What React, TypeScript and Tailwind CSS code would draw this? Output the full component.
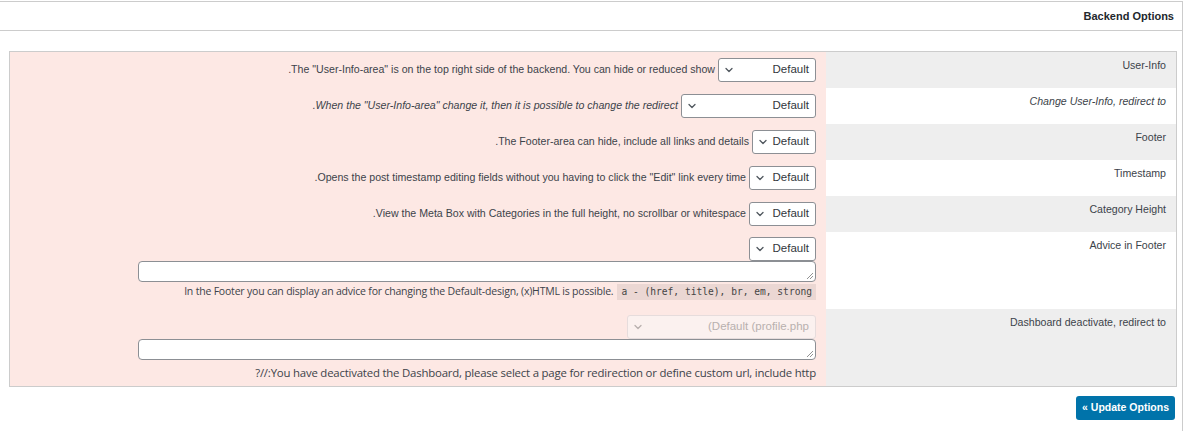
import React from "react";

function Chevron({ className = "" }: { className?: string }) {
  return (
    <svg className={`shrink-0 ${className}`} width="10" height="10" viewBox="0 0 10 10" fill="none">
      <path d="M2 3.5l3 3 3-3" stroke="currentColor" strokeWidth="1.3" strokeLinecap="round" strokeLinejoin="round" />
    </svg>
  );
}

function Select({ width, label = "Default", disabled = false }: { width: string; label?: string; disabled?: boolean }) {
  return (
    <div
      className={`${width} h-6 shrink-0 flex items-center justify-between gap-[4px] rounded-[3px] border pl-[5px] pr-[6px] text-[11.5px] ${
        disabled ? "border-[#e6dcdc] bg-[#fbf1ef] text-[#b8b0ae]" : "border-[#8c8f94] bg-white text-[#32373c]"
      }`}
    >
      <Chevron className={disabled ? "text-[#b8b0ae]" : "text-[#50575e]"} />
      <span className="whitespace-nowrap">{label}</span>
    </div>
  );
}

const rows = [
  {
    label: "User-Info",
    text: '.The "User-Info-area" is on the top right side of the backend. You can hide or reduced show',
    width: "w-[98px]",
  },
  {
    label: "Change User-Info, redirect to",
    text: '.When the "User-Info-area" change it, then it is possible to change the redirect',
    width: "w-[135px]",
    italic: true,
  },
  { label: "Footer", text: ".The Footer-area can hide, include all links and details", width: "w-[64px]" },
  {
    label: "Timestamp",
    text: '.Opens the post timestamp editing fields without you having to click the "Edit" link every time',
    width: "w-[67px]",
  },
  {
    label: "Category Height",
    text: ".View the Meta Box with Categories in the full height, no scrollbar or whitespace",
    width: "w-[67px]",
  },
];

function Textarea() {
  return (
    <div className="relative w-[678px] h-[21px] rounded-[4px] border border-[#8c8f94] bg-white">
      <svg className="absolute right-[1px] bottom-[1px]" width="8" height="8" viewBox="0 0 8 8">
        <path d="M7 1L1 7M7 4L4 7" stroke="#777" strokeWidth="0.8" />
      </svg>
    </div>
  );
}

export default function App() {
  return (
    <div className="w-[1187px] h-[431px] bg-white text-[#3c434a] font-['Liberation_Sans',sans-serif] text-[10.6px]">
      <div className="w-[1183px] h-full mt-px border-t border-r border-[#cccccc]">
        {/* Header */}
        <div className="h-[29px] border-b border-[#cccccc] flex items-center justify-end pr-[8px]">
          <h2 className="text-[11px] font-bold text-[#23282d]">Backend Options</h2>
        </div>

        {/* Options table */}
        <div className="ml-[9px] mt-[20px] w-[1168px] border border-[#cccccc] bg-[#fde8e4]">
          {rows.map((r, i) => (
            <div key={r.label} className="flex h-[36px]">
              <div className="w-[816px] flex items-center justify-end gap-[3px] pr-[10px]">
                <span className={r.italic ? "italic" : ""}>{r.text}</span>
                <Select width={r.width} />
              </div>
              <div
                className={`flex-1 pt-[6px] pr-[10px] text-right ${i % 2 === 0 ? "bg-[#eeeeee]" : "bg-white"} ${
                  r.italic ? "italic" : ""
                }`}
              >
                {r.label}
              </div>
            </div>
          ))}

          {/* Advice in Footer */}
          <div className="flex h-[77px]">
            <div className="w-[816px] flex flex-col items-end pr-[10px] pt-[5px]">
              <Select width="w-[67px]" />
              <Textarea />
              <div className="mt-[2px] flex items-center gap-[4px]">
                <span className="font-['Open_Sans',sans-serif] text-[10.5px] tracking-[-0.2px]">
                  In the Footer you can display an advice for changing the Default-design, (x)HTML is possible.
                </span>
                <code className="bg-[#00000012] px-[4px] py-[1px] font-['DejaVu_Sans_Mono',monospace] text-[9.6px] text-[#444]">
                  a - (href, title), br, em, strong
                </code>
              </div>
            </div>
            <div className="flex-1 bg-white pt-[6px] pr-[10px] text-right">Advice in Footer</div>
          </div>

          {/* Dashboard */}
          <div className="flex h-[77px]">
            <div className="w-[816px] flex flex-col items-end pr-[10px] pt-[6px]">
              <Select width="w-[189px]" label="(Default (profile.php" disabled />
              <Textarea />
              <span className="mt-[4px] font-['Open_Sans',sans-serif] text-[11.4px] tracking-[-0.2px]">
                ?//:You have deactivated the Dashboard, please select a page for redirection or define custom url, include http
              </span>
            </div>
            <div className="flex-1 bg-[#eeeeee] pt-[6px] pr-[10px] text-right">Dashboard deactivate, redirect to</div>
          </div>
        </div>

        {/* Submit */}
        <div className="flex justify-end pr-[7px] mt-[9px]">
          <button className="h-[24px] px-[6px] rounded-[3px] bg-[#0073aa] text-white text-[10.5px] font-bold">
            « Update Options
          </button>
        </div>
      </div>
    </div>
  );
}
